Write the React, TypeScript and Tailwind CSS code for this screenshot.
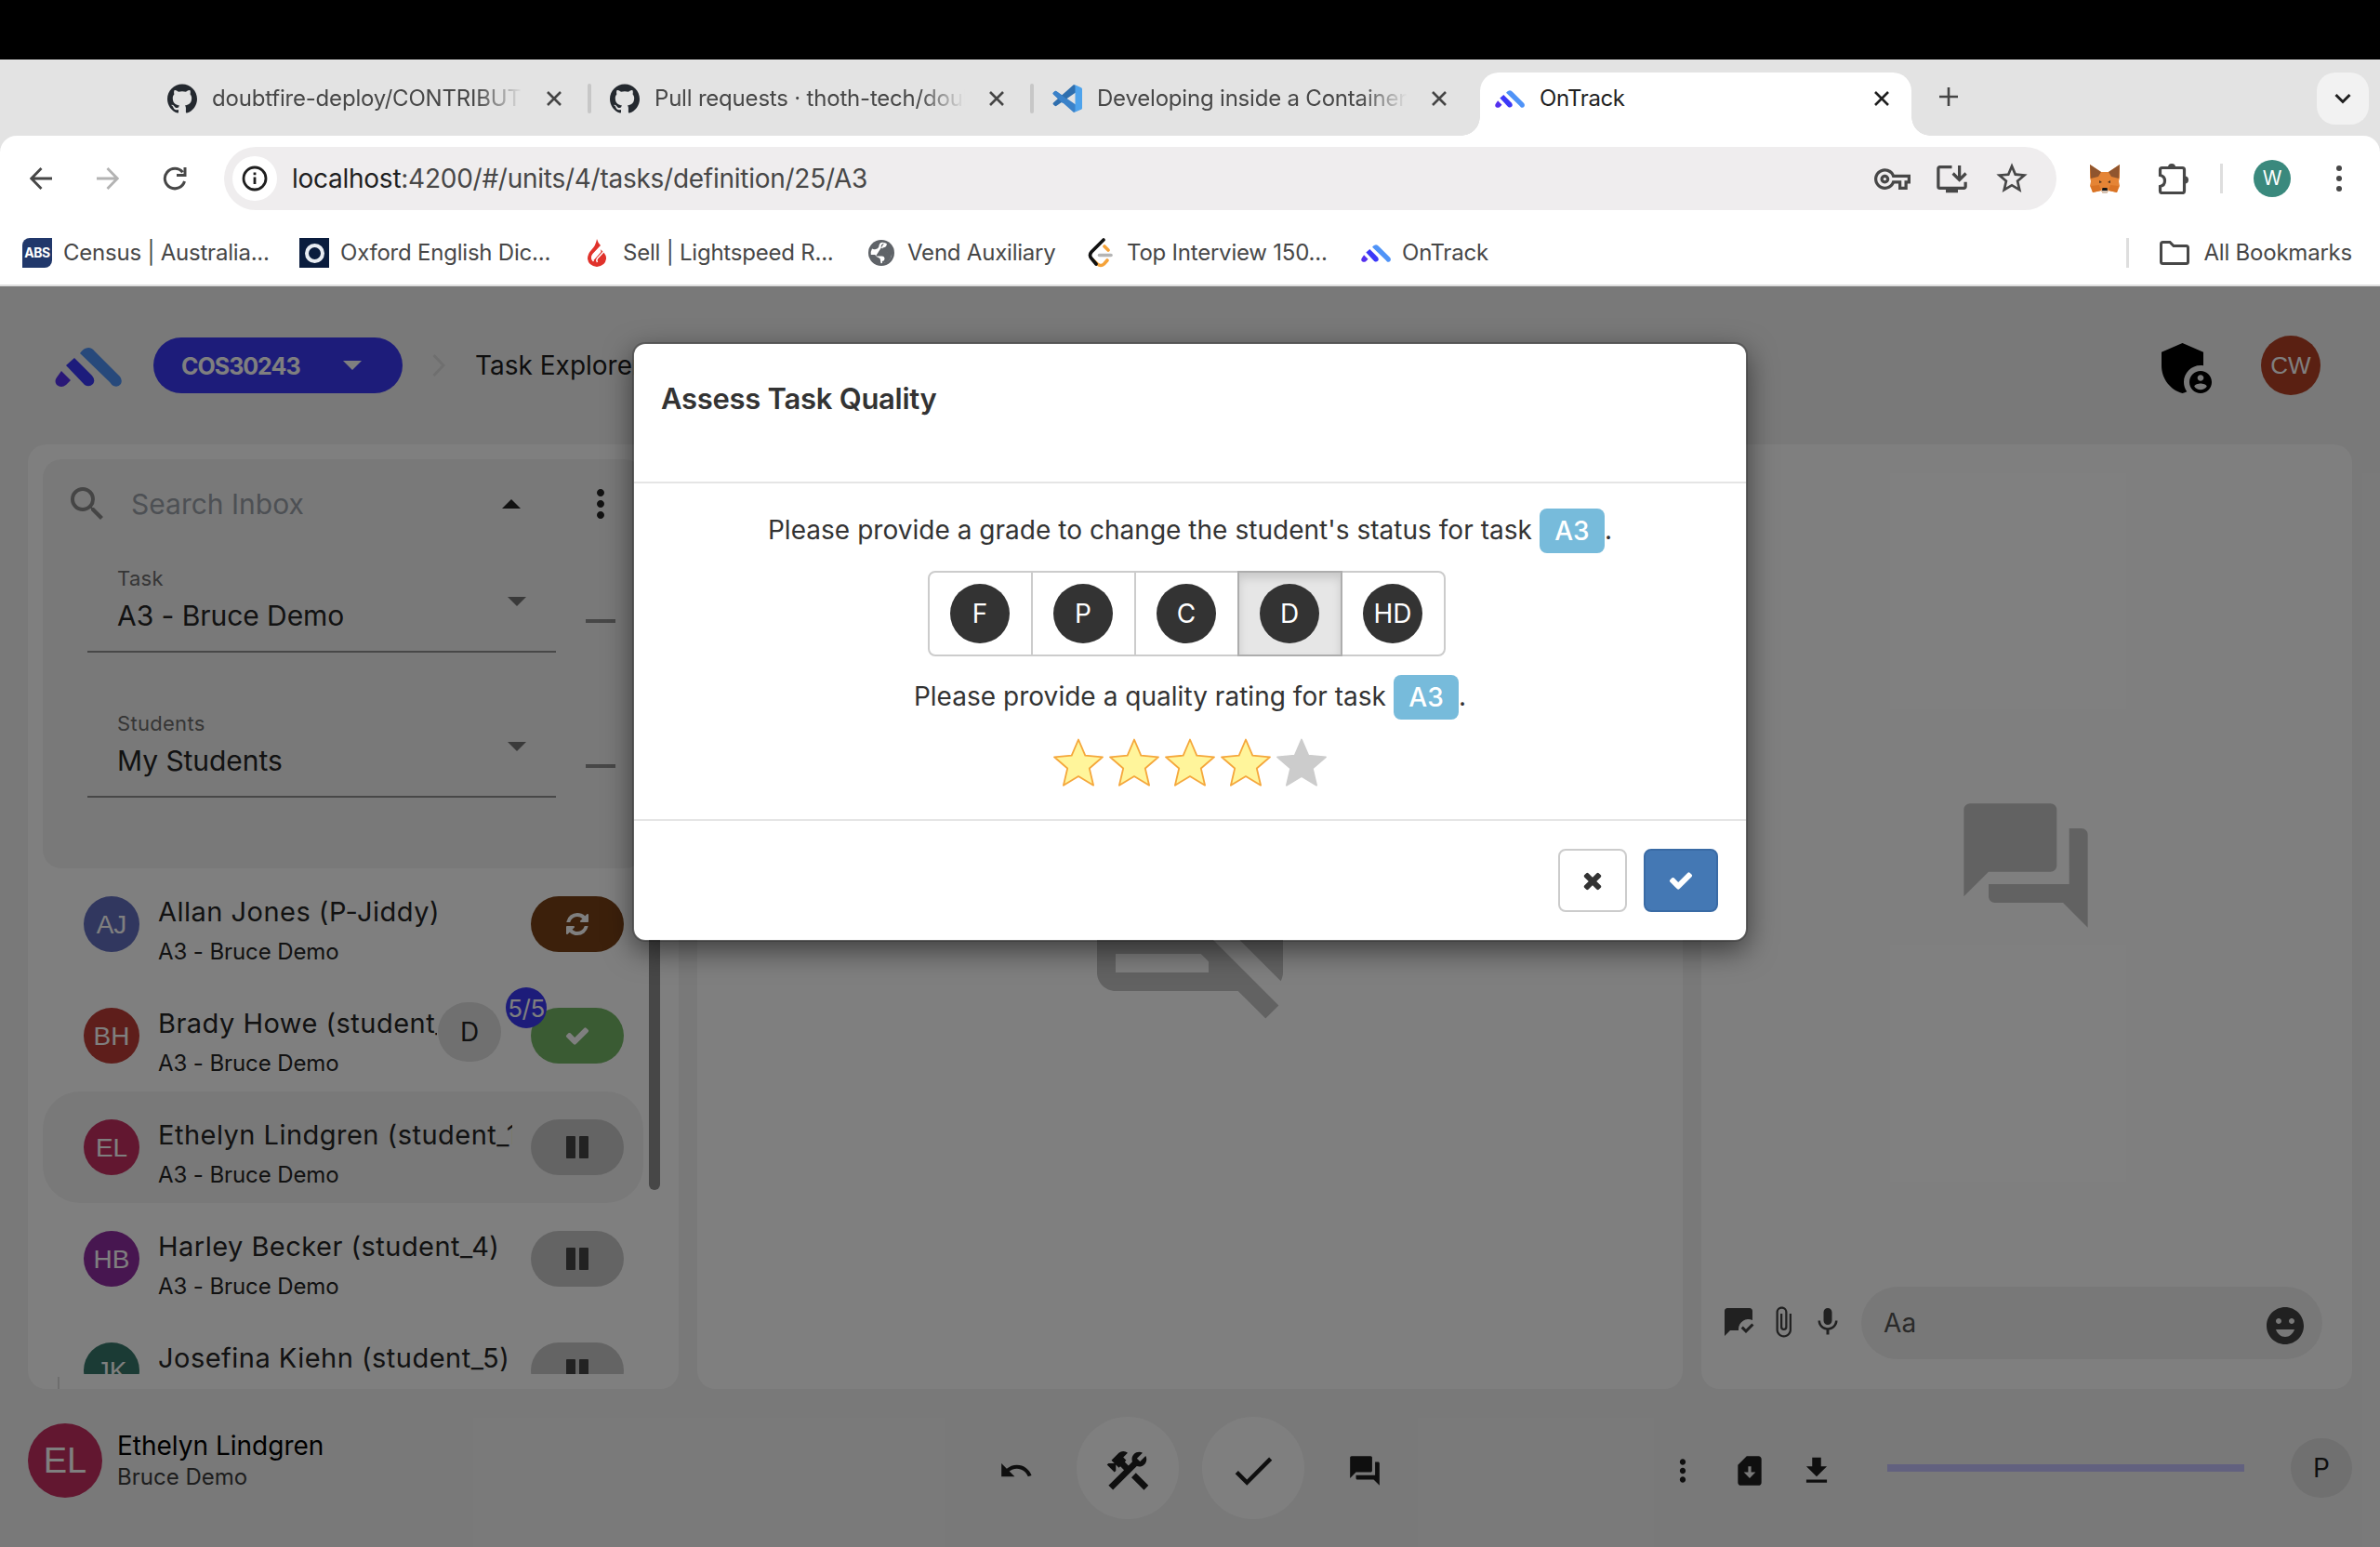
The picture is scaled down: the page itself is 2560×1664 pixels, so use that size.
import React from "react";
import {
  MdAdminPanelSettings, MdAttachFile, MdCheck, MdConstruction, MdEmojiEmotions, MdFileDownload,
  MdForum, MdInstallDesktop, MdMic, MdMoreVert, MdOutlineVpnKey, MdSearch,
  MdSimCardDownload, MdStarBorder, MdUndo, MdMarkChatRead,
} from "react-icons/md";
import { SiGithub } from "react-icons/si";

const FA = {
  times: "M1490 1322q0 40-28 68l-136 136q-28 28-68 28t-68-28l-294-294-294 294q-28 28-68 28t-68-28l-136-136q-28-28-28-68t28-68l294-294-294-294q-28-28-28-68t28-68l136-136q28-28 68-28t68 28l294 294 294-294q28-28 68-28t68 28l136 136q28 28 28 68t-28 68l-294 294 294 294q28 28 28 68z",
  check: "M1671 566q0 40-28 68l-724 724-136 136q-28 28-68 28t-68-28l-136-136-362-362q-28-28-28-68t28-68l136-136q28-28 68-28t68 28l294 295 656-657q28-28 68-28t68 28l136 136q28 28 28 68z",
  refresh: "M1639 1056q0 5-1 7-64 268-268 434.5t-478 166.5q-146 0-282.5-55t-243.5-157l-129 129q-19 19-45 19t-45-19-19-45v-448q0-26 19-45t45-19h448q26 0 45 19t19 45-19 45l-137 137q71 66 161 102t187 36q134 0 250-65t186-179q11-17 53-117 8-23 30-23h192q13 0 22.5 9.5t9.5 22.5zm25-800v448q0 26-19 45t-45 19h-448q-26 0-45-19t-19-45 19-45l138-138q-148-137-349-137-134 0-250 65t-186 179q-11 17-53 117-8 23-30 23h-199q-13 0-22.5-9.5t-9.5-22.5v-7q65-268 270-434.5t480-166.5q146 0 284 55.5t245 156.5l130-129q19-19 45-19t45 19 19 45z",
  pause: "M1664 192v1408q0 26-19 45t-45 19h-512q-26 0-45-19t-19-45v-1408q0-26 19-45t45-19h512q26 0 45 19t19 45zm-896 0v1408q0 26-19 45t-45 19h-512q-26 0-45-19t-19-45v-1408q0-26 19-45t45-19h512q26 0 45 19t19 45z",
};

function Fa({ name, className }: { name: keyof typeof FA; className: string }) {
  return (
    <svg viewBox="0 0 1792 1792" fill="currentColor" className={className}>
      <path d={FA[name]} />
    </svg>
  );
}

function OnTrackLogo({ className }: { className: string }) {
  return (
    <svg viewBox="0 0 72 42" className={className}>
      <path d="M27 6Q31 0 36 0q4 0 7 4l27 27q3 4 1 8-3 4-8 2-2-1-4-4z" fill="#4f93f7" />
      <path d="M21 11l19 19q4 5 1 9-4 4-9 1L12 19z" fill="#3b38f8" />
      <path d="M7 25l10 10-5 5q-5 4-10 0-3-4 0-8z" fill="#5430ee" />
    </svg>
  );
}

function VsCode() {
  return (
    <svg viewBox="0 0 32 32" className="size-8">
      <path d="M23 31 1 11.500q-1-1 0-2l1.500-1.300q1-.8 2 0L30 26v1.500z" fill="#3b82c9" />
      <path d="M23 1 1 20.500q-1 1 0 2l1.500 1.300q1 .8 2 0L30 6V4.500z" fill="#2f6fae" />
      <path d="M1 11.500q-1-1 0-2l1.500-1.300q1-.8 2 0L16 17l-5 4z" fill="#3b82c9" />
      <path d="M23 31q1.500-.4 1.500-2.500v-25Q24.500 1.500 23 .8L31 4.300q1 .5 1 1.500v20.400q0 1-1 1.500z" fill="#4ea3ec" />
    </svg>
  );
}

function Fox() {
  return (
    <svg viewBox="0 0 32 32" className="size-8">
      <path d="M0 1l12 8h8l12-8v14l-1 4 1 5-3 7-9-2-2 3h-4l-2-3-9 2-3-7 1-5-1-4z" fill="#e58435" />
      <path d="M0 1l12 8-3 5-8 2zM32 1l-12 8 3 5 8 2z" fill="#90552e" />
      <path d="M10 18l3 2-3 1zM22 18l-3 2 3 1z" fill="#4a3320" />
      <path d="M1 24l9-1 2 6-9 2zM31 24l-9-1-2 6 9 2z" fill="#d97325" />
      <path d="M12 28h8l-2 4h-4z" fill="#d3c3b6" />
      <path d="M13.500 26h5l.5 3h-6z" fill="#161616" />
    </svg>
  );
}

function Globe() {
  return (
    <svg viewBox="0 0 28 28" className="size-7">
      <circle cx="14" cy="14" r="14" fill="#5f6368" />
      <path d="M13.500 3q4-.8 6.500 1.300-.2 2.700-2.500 3.700-2.500.2-2.500 2 .2 1.800 2.800 2 3 .3 3.200 3.500 1.500 1.200 4.200.3-.8 5-5 7.500-3 2-6.700 2l-.5-3.300q.2-2.200-1.800-2.800-3-.7-4-3.200H2.800q-.5-3.500 1.200-6.500 1.800 1 4 .4 3.500-1 3.500-4 .5-2 2-2.900z" fill="#fff" />
      <path d="M8 17.500h6.500q3 .2 3 3 0 2-2.500 2.500v2.300q6-.6 8.800-5.300 1.500-2.700 1.300-6-2.500 1-4.300-.8-.3-3-3.300-3.200-4-.5-3.800-3.600.5-2.200 3-2.700L18 2Z" fill="#5f6368" />
    </svg>
  );
}

function Cross({ color = "#454545" }: { color?: string }) {
  return (
    <span className="flex size-6 items-center justify-center">
      <svg viewBox="0 0 16 16" className="size-4" stroke={color} strokeWidth="2.600" fill="none">
        <path d="M1 1l14 14M15 1L1 15" />
      </svg>
    </span>
  );
}

function Tab({ icon, title, separator }: { icon: React.ReactNode; title: string; separator: boolean }) {
  return (
    <div className="flex h-14 w-[476px] shrink-0 items-center">
      {icon}
      <div className="ml-4 w-[334px] overflow-hidden whitespace-nowrap text-[24px] leading-8 tracking-[-0.2px] text-[#474747] [mask-image:linear-gradient(to_right,black_85%,transparent)]">
        {title}
      </div>
      <div className="ml-[22px] flex items-center">
        <Cross />
        {separator && <div className="ml-6 h-8 w-1 rounded-full bg-[#c7c7c7]" />}
      </div>
    </div>
  );
}

function TabStrip() {
  return (
    <div className="flex h-[82px] items-start bg-[#e3e3e3] pl-[180px] pt-[14px]">
      <Tab icon={<SiGithub className="size-8 text-[#24292f]" />} title="doubtfire-deploy/CONTRIBUTING" separator />
      <Tab icon={<SiGithub className="size-8 text-[#24292f]" />} title="Pull requests · thoth-tech/doubtfire" separator />
      <div className="-mr-9 flex"><Tab icon={<VsCode />} title="Developing inside a Container" separator={false} /></div>
      <div className="flex h-[68px] items-end">
        <div className="size-5 bg-[radial-gradient(circle_at_0_0,transparent_19.5px,white_20px)]" />
        <div className="h-[68px] w-[464px] rounded-t-[20px] bg-white">
          <div className="flex h-14 items-center pl-4 pr-5">
            <OnTrackLogo className="h-[19px] w-8" />
            <span className="ml-4 text-[24px] leading-8 tracking-[-0.4px] text-[#1f1f1f]">OnTrack</span>
            <span className="ml-auto"><Cross color="#1f1f1f" /></span>
          </div>
        </div>
        <div className="size-5 bg-[radial-gradient(circle_at_100%_0,transparent_19.5px,white_20px)]" />
      </div>
      <svg viewBox="0 0 20 20" className="ml-[10px] mt-4 size-5" stroke="#454545" strokeWidth="2.600"><path d="M10 0v20M0 10h20" /></svg>
      <div className="ml-auto mr-3 flex size-14 items-center justify-center rounded-[20px] bg-[#f2f2f2]">
        <svg viewBox="0 0 18 12" className="w-[18px]" stroke="#1f1f1f" strokeWidth="3" fill="none"><path d="M1.500 2L9 9.500 16.500 2" /></svg>
      </div>
    </div>
  );
}

function Toolbar() {
  return (
    <div className="flex h-[92px] items-center rounded-t-[18px] bg-white pl-8">
      <svg viewBox="0 0 24 24" className="size-6" stroke="#474747" strokeWidth="2.800" fill="none"><path d="M12.500 1L1.800 12l10.700 11M2 12h22" /></svg>
      <svg viewBox="0 0 24 24" className="ml-12 size-6" stroke="#b3b3b3" strokeWidth="2.800" fill="none"><path d="M11.500 1l10.700 11-10.700 11M0 12h22" /></svg>
      <svg viewBox="0 0 26 26" className="ml-[47px] size-[26px]" stroke="#474747" strokeWidth="3" fill="none"><path d="M21.500 6.200A10.800 10.800 0 1 0 23.500 16M24 1v8.500h-9" /></svg>
      <div className="ml-10 flex h-[68px] w-[1971px] items-center rounded-full bg-[#efedee] pl-[9px] pr-[28px]">
        <span className="flex size-12 items-center justify-center rounded-full bg-white">
          <svg viewBox="0 0 28 28" className="size-7" fill="none" stroke="#1f1f1f" strokeWidth="2.800"><circle cx="14" cy="14" r="12" /><path d="M14 12.500V20M14 7.500v2.800" /></svg>
        </span>
        <span className="ml-4 text-[28px] leading-9 tracking-[-0.26px] text-[#474747]"><span className="text-[#1f1f1f]">localhost</span>:4200/#/units/4/tasks/definition/25/A3</span>
        <span className="ml-auto flex items-center gap-[25px] text-[#474747]">
          <MdOutlineVpnKey className="size-[39px]" />
          <MdInstallDesktop className="size-[39px]" />
          <MdStarBorder className="size-[40px]" />
        </span>
      </div>
      <span className="ml-9"><Fox /></span>
      <svg viewBox="0 0 34 34" className="ml-[41px] size-[34px]" fill="none" stroke="#474747" strokeWidth="3.200">
        <path d="M2.500 7.500q0-2 2-2h22q2 0 2 2v23q0 2-2 2h-22q-2 0-2-2v-5q5-1 5-6t-5-6z" />
        <path d="M11 5a4 4 0 0 1 8 0zM29 14.500a4 4 0 0 1 0 8z" fill="#474747" stroke="none" />
      </svg>
      <div className="ml-[33px] h-8 w-[3px] bg-[#dedede]" />
      <span className="ml-[33px] flex size-10 items-center justify-center rounded-full bg-[#3a897d] text-[21px] text-white">W</span>
      <svg viewBox="0 0 6 30" className="ml-[49px] h-[30px] w-[6px]" fill="#474747"><circle cx="3" cy="4" r="3" /><circle cx="3" cy="15" r="3" /><circle cx="3" cy="26" r="3" /></svg>
    </div>
  );
}

function Bookmarks() {
  const t = "whitespace-nowrap";
  return (
    <div className="flex h-[68px] items-center bg-white pl-6 text-[24px] leading-8 tracking-[-0.22px] text-[#474747]">
      <div className="flex w-[298px] items-center">
        <span className="flex size-8 items-center justify-center rounded-br-lg rounded-tl-lg bg-[#21386b] text-[14px] font-bold leading-none tracking-[-0.5px] text-white">ABS</span>
        <span className={t + " ml-3"}>Census | Australia...</span>
      </div>
      <div className="flex w-[308px] items-center">
        <span className="flex size-8 items-center justify-center bg-[#0a1c3d]"><span className="size-[21px] rounded-full border-[4px] border-[#e8ecf2]" /></span>
        <span className={t + " ml-3"}>Oxford English Dic...</span>
      </div>
      <div className="flex w-[304px] items-center pl-[2px]">
        <svg viewBox="0 0 20 30" className="h-[30px] w-5"><path d="M10 0q1 4 4 7L5.500 16q-3 4 1 7l8-9q0-2-1-3 7 5 6.500 10.500Q19 29 10 30 1 29 0 21.500 0 16 4 12q5-5 6-12z" fill="#e0322b" /><path d="M13.500 9L5.500 18q-2 3 1 6M17.500 13.500L10.500 21q-1.500 2 0 4" stroke="#fff" strokeWidth="1.500" fill="none" /></svg>
        <span className={t + " ml-[18px]"}>Sell | Lightspeed R...</span>
      </div>
      <div className="flex w-[236px] items-center">
        <Globe />
        <span className={t + " ml-[14px]"}>Vend Auxiliary</span>
      </div>
      <div className="flex w-[294px] items-center">
        <svg viewBox="0 0 28 32" className="h-8 w-7" fill="none" strokeWidth="3.600" strokeLinecap="round"><path d="M18 9l4 4M21 24l-3.500 4q-3.500 3-7 0L6 24" stroke="#f5a33a" /><path d="M17 2L4 15q-3 3.500 0 7l5 6" stroke="#111" /><path d="M12.500 18.500H25" stroke="#b5b5b5" /></svg>
        <span className={t + " ml-[14px]"}>Top Interview 150...</span>
      </div>
      <div className="flex items-center">
        <OnTrackLogo className="h-[19px] w-8" />
        <span className={t + " ml-3"}>OnTrack</span>
      </div>
      <div className="ml-auto mr-[30px] flex items-center">
        <div className="h-8 w-[3px] bg-[#dedede]" />
        <svg viewBox="0 0 32 26" className="ml-[33px] h-[26px] w-8" fill="none" stroke="#474747" strokeWidth="3"><path d="M3.500 1.500h7.500l4 4h13.500q2 0 2 2v15q0 2-2 2h-25q-2 0-2-2v-19q0-2 2-2z" /></svg>
        <span className={t + " ml-4"}>All Bookmarks</span>
      </div>
    </div>
  );
}

function Header() {
  return (
    <div className="flex h-[170px] items-center pl-[59px] pr-16">
      <OnTrackLogo className="mt-1 h-[42px] w-[72px]" />
      <div className="ml-[34px] flex h-[60px] w-[268px] items-center rounded-full bg-[#3a38f4] pl-[30px] pr-11 text-white">
        <span className="mt-[3px] text-[25px] font-bold tracking-[-1px]">COS30243</span>
        <svg viewBox="0 0 20 10" className="ml-auto w-5" fill="currentColor"><path d="M0 0h20L10 10z" /></svg>
      </div>
      <svg viewBox="0 0 14 24" className="ml-8 h-6 w-[14px]" fill="none" stroke="#dedede" strokeWidth="3"><path d="M1.500 1l10.500 11L1.500 23" /></svg>
      <span className="ml-[32px] text-[28px] text-[#1c1c1c]">Task Explorer</span>
      <MdAdminPanelSettings className="ml-auto size-[72px] mt-[6px] text-black" />
      <span className="ml-11 flex size-16 items-center justify-center rounded-full bg-[#b44024] font-['Liberation_Sans',sans-serif] text-[26px] text-white">CW</span>
    </div>
  );
}

function Filter({ label, value }: { label: string; value: string }) {
  return (
    <div className="flex h-[156px] pl-12">
      <div className="flex h-[98px] w-[504px] border-b-2 border-[#909090] pl-[32px]">
        <div>
          <div className="mt-1 text-[22px] leading-7 tracking-[0.3px] text-[#6d6d6d]">{label}</div>
          <div className="mt-[10px] whitespace-nowrap text-[30px] leading-8 tracking-[-0.05px] text-[#242424]">{value}</div>
        </div>
        <svg viewBox="0 0 20 10" className="ml-auto mr-8 mt-[38px] h-[10px] w-5" fill="#757575"><path d="M0 0h20L10 10z" /></svg>
      </div>
      <div className="ml-8 mt-[62px] h-1 w-8 bg-[#8f8f8f]" />
    </div>
  );
}

type Student = { initials: string; name: string; color: string; pill: string; icon: keyof typeof FA; selected?: boolean; badges?: boolean };

const students: Student[] = [
  { initials: "AJ", name: "Allan Jones (P-Jiddy)", color: "bg-[#626ebe]", pill: "bg-[#784116] text-white", icon: "refresh" },
  { initials: "BH", name: "Brady Howe (student_2)", color: "bg-[#bc3c36]", pill: "bg-[#75b767] text-white", icon: "check", badges: true },
  { initials: "EL", name: "Ethelyn Lindgren (student_1)", color: "bg-[#c42f60]", pill: "bg-[#c9c9c9] text-[#444]", icon: "pause", selected: true },
  { initials: "HB", name: "Harley Becker (student_4)", color: "bg-[#8e2ca0]", pill: "bg-[#c9c9c9] text-[#444]", icon: "pause" },
  { initials: "JK", name: "Josefina Kiehn (student_5)", color: "bg-[#37776a]", pill: "bg-[#c9c9c9] text-[#444]", icon: "pause" },
];

function StudentRow({ s }: { s: Student }) {
  return (
    <div className={"relative flex h-[120px] w-[646px] shrink-0 items-start rounded-[40px] pl-11 " + (s.selected ? "bg-[#f3f3f3]" : "")}>
      <span className={"mt-[30px] flex size-[60px] shrink-0 items-center justify-center rounded-full font-['Liberation_Sans',sans-serif] text-[28px] text-white " + s.color}>
        <span className="mt-[2px]">{s.initials}</span>
      </span>
      <div className={"ml-5 shrink-0 overflow-hidden whitespace-nowrap pt-[27px] text-[#242424] " + (s.badges ? "mr-[81px] w-[300px]" : "w-[381px]")}>
        <div className="text-[29px] leading-10 tracking-[0.48px]">{s.name}</div>
        <div className="mt-[7px] text-[24px] leading-8 tracking-[-0.1px]">A3 - Bruce Demo</div>
      </div>
      <span className={"ml-5 mt-[30px] flex h-[60px] w-[100px] shrink-0 items-center justify-center rounded-full " + s.pill}>
        <Fa name={s.icon} className="size-7" />
      </span>
      {s.badges && (
        <>
          <span className="absolute left-[425px] top-6 flex h-16 w-[68px] items-center justify-center rounded-full bg-[#e0e0e0] text-[28px] text-[#242424]">D</span>
          <span className="absolute left-[498px] top-2 flex size-11 items-center justify-center rounded-full bg-[#3a38f4] text-[26px] tracking-[-0.5px] text-white">5/5</span>
        </>
      )}
    </div>
  );
}

function Inbox() {
  return (
    <div className="flex h-[1016px] w-[700px] flex-col rounded-[20px] bg-white pl-4 pt-4">
      <div className="h-[440px] w-[646px] rounded-[20px] bg-[#f3f3f3]">
        <div className="flex h-[96px] items-center pl-6 pr-8">
          <MdSearch className="size-[48px] text-[#8a8a8a]" />
          <span className="ml-[23px] text-[30px] text-[#9aa0a8]">Search Inbox</span>
          <svg viewBox="0 0 20 10" className="ml-auto h-[10px] w-5" fill="#242424"><path d="M0 10h20L10 0z" /></svg>
          <MdMoreVert className="ml-[62px] size-12 text-[#242424] -mr-[10px]" />
        </div>
        <div className="pt-[14px]">
          <Filter label="Task" value="A3 - Bruce Demo" />
          <Filter label="Students" value="My Students" />
        </div>
      </div>
      <div className="flex h-[544px] gap-[6px] overflow-hidden">
        <div>{students.map((s) => <StudentRow key={s.initials} s={s} />)}</div>
        <div className="h-[346px] w-3 rounded-full bg-[#8f8f8f]" />
      </div>
      <div className="ml-4 mt-[3px] h-[13px] w-[2px] bg-[#dcdcdc]" />
    </div>
  );
}

function EmptyViewer() {
  return (
    <div className="flex w-[1060px] justify-center rounded-[20px] bg-white pt-[388px]">
      <svg viewBox="0 0 24 24" className="size-[240px] text-[#c4c4c4]" fill="currentColor">
        <path d="M20 4H6.830l8 8H20v2h-3.170l4.930 4.930c.15-.28.24-.59.24-.93V6c0-1.100-.9-2-2-2zM1.040 3.870l1.200 1.200C2.090 5.350 2 5.660 2 6v12c0 1.100.9 2 2 2h13.170l2.960 2.960 1.410-1.410L2.450 2.450 1.040 3.870zM8 12v2H4v-2h4zm6 4.830V18H4v-2h9.170l.83.83z" />
      </svg>
    </div>
  );
}

function Chat() {
  return (
    <div className="flex w-[700px] flex-col items-center rounded-[20px] bg-white pt-[373px]">
      <MdForum className="mr-[3px] size-[160px] text-[#c5c5c5]" />
      <div className="mt-auto mb-8 flex h-[78px] w-full items-center pl-[22px] pr-8 text-[#424242]">
        <div className="mb-[2px] flex gap-3">
          <MdMarkChatRead className="size-9" />
          <MdAttachFile className="size-9" />
          <MdMic className="size-9" />
        </div>
        <div className="ml-[18px] flex h-[78px] flex-1 items-center rounded-full bg-[#f1f1f1] pl-6 pr-4">
          <span className="text-[28px] tracking-[0.3px] text-[#555]">Aa</span>
          <MdEmojiEmotions className="ml-auto mt-[6px] size-12" />
        </div>
      </div>
    </div>
  );
}

function Footer() {
  return (
    <div className="flex h-[170px] items-center pl-[30px] text-[#1f1f1f]">
      <div className="mb-[16px] flex w-[1044px] items-center">
        <span className="flex size-20 items-center justify-center rounded-full bg-[#c42f60] font-['Liberation_Sans',sans-serif] text-[38px] text-white">EL</span>
        <div className="ml-4">
          <div className="text-[28px] leading-9 text-black">Ethelyn Lindgren</div>
          <div className="text-[24px] leading-8 text-[#3c3c3c]">Bruce Demo</div>
        </div>
      </div>
      <MdUndo className="mt-[6px] size-[38px]" />
      <span className="ml-[46px] flex size-[110px] items-center justify-center rounded-full bg-white"><MdConstruction className="mt-[6px] size-[54px]" /></span>
      <span className="ml-[25px] flex size-[110px] items-center justify-center rounded-full bg-white"><MdCheck className="mt-[6px] size-[54px]" /></span>
      <MdForum className="ml-[46px] mt-[6px] size-[38px]" />
      <div className="ml-[304px] mt-[6px] flex items-center gap-[34px]">
        <MdMoreVert className="size-[38px]" />
        <MdSimCardDownload className="size-[38px]" />
        <MdFileDownload className="size-[38px]" />
      </div>
      <div className="ml-[57px] h-2 w-[384px] bg-[#c5c3ff]" />
      <span className="ml-[50px] flex h-16 w-[66px] items-center justify-center rounded-full bg-[#e0e0e0] text-[28px]">P</span>
    </div>
  );
}

function Star({ on }: { on: boolean }) {
  return (
    <svg viewBox="0 0 60 60" className="size-[60px]">
      <path d="M30 5.500l7.300 17.200 18.700 1.600-14.200 12.200 4.300 18.200L30 45 13.900 54.700l4.300-18.200L4 24.300l18.700-1.600z" fill={on ? "#fff59b" : "#cccccc"} stroke={on ? "#f5a73b" : "#cccccc"} strokeWidth="1.800" strokeLinejoin="round" />
    </svg>
  );
}

function TaskLabel() {
  return <span className="ml-[8px] flex h-12 w-[70px] items-center justify-center rounded-lg bg-[#77bbdb] font-medium text-white">A3</span>;
}

const grades = ["F", "P", "C", "D", "HD"];

function Modal() {
  return (
    <div className="h-[645px] w-[1200px] rounded-[14px] border-2 border-black/20 bg-white bg-clip-padding text-[#333] shadow-[0_10px_30px_rgba(0,0,0,0.5)]">
      <div className="h-[150px] border-b-2 border-[#e5e5e5] pl-[29px] pt-[39px]">
        <h1 className="text-[31px] font-semibold leading-10 tracking-[-0.28px]">Assess Task Quality</h1>
      </div>
      <div className="flex h-[363px] flex-col items-center border-b-2 border-[#e5e5e5] pt-[27px] text-[28px] leading-[46px] tracking-[0.03px]">
        <div className="flex h-12 whitespace-nowrap"><span>Please provide a grade to change the student's status for task</span><TaskLabel />.</div>
        <div className="mr-2 mt-[19px] flex">
          {grades.map((g, i) => (
            <div
              key={g}
              className={
                "flex h-[92px] w-[113px] items-center justify-center border-2 " +
                (i > 0 ? "-ml-[2px] " : "rounded-l-lg ") +
                (i === 4 ? "rounded-r-lg " : "") +
                (g === "D" ? "z-10 border-[#adadad] bg-[#e6e6e6] shadow-[inset_0_6px_10px_rgba(0,0,0,0.125)]" : "border-[#ccc]")
              }
            >
              <span className="flex size-16 items-center justify-center rounded-full bg-[#333] text-[28px] text-white">{g}</span>
            </div>
          ))}
        </div>
        <div className="mt-5 flex h-12 whitespace-nowrap"><span>Please provide a quality rating for task</span><TaskLabel />.</div>
        <div className="mt-4 flex">
          {[1, 2, 3, 4, 5].map((n) => <Star key={n} on={n < 5} />)}
        </div>
      </div>
      <div className="flex justify-end gap-[18px] pr-[30px] pt-[30px]">
        <button className="flex h-[68px] w-[74px] items-center justify-center rounded-lg border-2 border-[#ccc]"><Fa name="times" className="size-7" /></button>
        <button className="flex h-[68px] w-20 items-center justify-center rounded-lg border-2 border-[#3a6ba5] bg-[#4478b4] text-white"><Fa name="check" className="size-7" /></button>
      </div>
    </div>
  );
}

export default function App() {
  return (
    <div className="flex h-[1664px] w-[2560px] flex-col overflow-hidden bg-[#e3e3e3] font-['Inter',sans-serif]">
      <div className="h-16 bg-black" />
      <TabStrip />
      <Toolbar />
      <Bookmarks />
      <div className="h-[2px] bg-[#dedede]" />
      <div className="relative h-[1356px] bg-[#f3f3f3]">
        <Header />
        <div className="flex gap-5 px-[30px]">
          <Inbox />
          <EmptyViewer />
          <Chat />
        </div>
        <Footer />
        <div className="absolute inset-0 flex items-start justify-center bg-black/50 pt-[60px]">
          <Modal />
        </div>
      </div>
    </div>
  );
}
